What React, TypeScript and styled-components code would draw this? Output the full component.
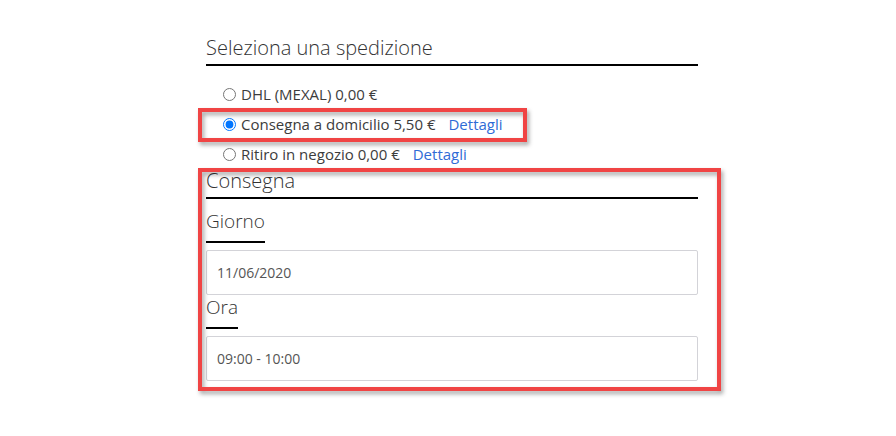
import styled, { createGlobalStyle } from "styled-components";

const GlobalStyle = createGlobalStyle`
  html, body {
    margin: 0;
    padding: 0;
    background: #ffffff;
  }
  body {
    font-family: "Open Sans", "Liberation Sans", sans-serif;
    color: #333333;
  }
`;

const options = [
  { id: "dhl", label: "DHL (MEXAL) 0,00 €", details: false },
  { id: "home", label: "Consegna a domicilio 5,50 €", details: true },
  { id: "shop", label: "Ritiro in negozio 0,00 €", details: true },
];

const App = () => {
  return (
    <Page>
      <GlobalStyle />
      <Form>
        <Heading>Seleziona una spedizione</Heading>
        <OptionList>
          {options.map((o) => (
            <Option key={o.id}>
              <Radio type="radio" name="spedizione" defaultChecked={o.id === "home"} />
              <OptionText>{o.label}</OptionText>
              {o.details && <Details href="#">Dettagli</Details>}
            </Option>
          ))}
        </OptionList>
        <Heading>Consegna</Heading>
        <Field $first>
          <Label>Giorno</Label>
          <Input readOnly value="11/06/2020" />
        </Field>
        <Field>
          <Label>Ora</Label>
          <Input readOnly value="09:00 - 10:00" />
        </Field>
        {/* annotation frames drawn over the form */}
        <Highlight $top={72} $left={-8} $width={329} $height={34} />
        <Highlight $top={132} $left={-8} $width={523} $height={223} />
      </Form>
    </Page>
  );
};

export default App;

const Highlight = styled.div<{ $top: number; $left: number; $width: number; $height: number }>`
  position: absolute;
  top: ${(p) => p.$top}px;
  left: ${(p) => p.$left}px;
  width: ${(p) => p.$width}px;
  height: ${(p) => p.$height}px;
  box-sizing: border-box;
  border: 4px solid #f04444;
  filter: drop-shadow(2px 3px 2px rgba(0, 0, 0, 0.35));
  pointer-events: none;
`;
const Input = styled.input`
  display: block;
  box-sizing: border-box;
  width: 100%;
  height: 45px;
  margin-top: 7px;
  padding: 0 10px;
  border: 1px solid #d3d3d8;
  border-radius: 2px;
  font-family: inherit;
  font-size: 14px;
  color: #555555;
  background: #ffffff;
  outline: none;
`;
const Label = styled.div`
  display: inline-block;
  font-size: 19px;
  font-weight: 300;
  line-height: 24px;
  padding-bottom: 8px;
  border-bottom: 2px solid #000000;
  color: #333333;
`;
const Field = styled.div<{ $first?: boolean }>`
  margin-top: ${(p) => (p.$first ? "10px" : "0")};
`;
const Details = styled.a`
  margin-left: 13px;
  color: #2f6bd6;
  text-decoration: none;
`;
const OptionText = styled.span``;
const Radio = styled.input`
  width: 13px;
  height: 13px;
  margin: 0 5px 0 0;
`;
const Option = styled.label`
  display: flex;
  align-items: center;
  height: 30px;
  font-size: 15px;
  color: #3c3c3c;
`;
const OptionList = styled.div`
  margin-top: 13px;
  padding-left: 17px;
  height: 90px;
`;
const Heading = styled.div`
  font-size: 20px;
  font-weight: 300;
  line-height: 24px;
  padding-bottom: 4px;
  border-bottom: 2px solid #000000;
  color: #333333;
`;
const Form = styled.div`
  position: relative;
  width: 492px;
`;
const Page = styled.div`
  padding: 36px 0 0 206px;
  height: 400px;
`;
